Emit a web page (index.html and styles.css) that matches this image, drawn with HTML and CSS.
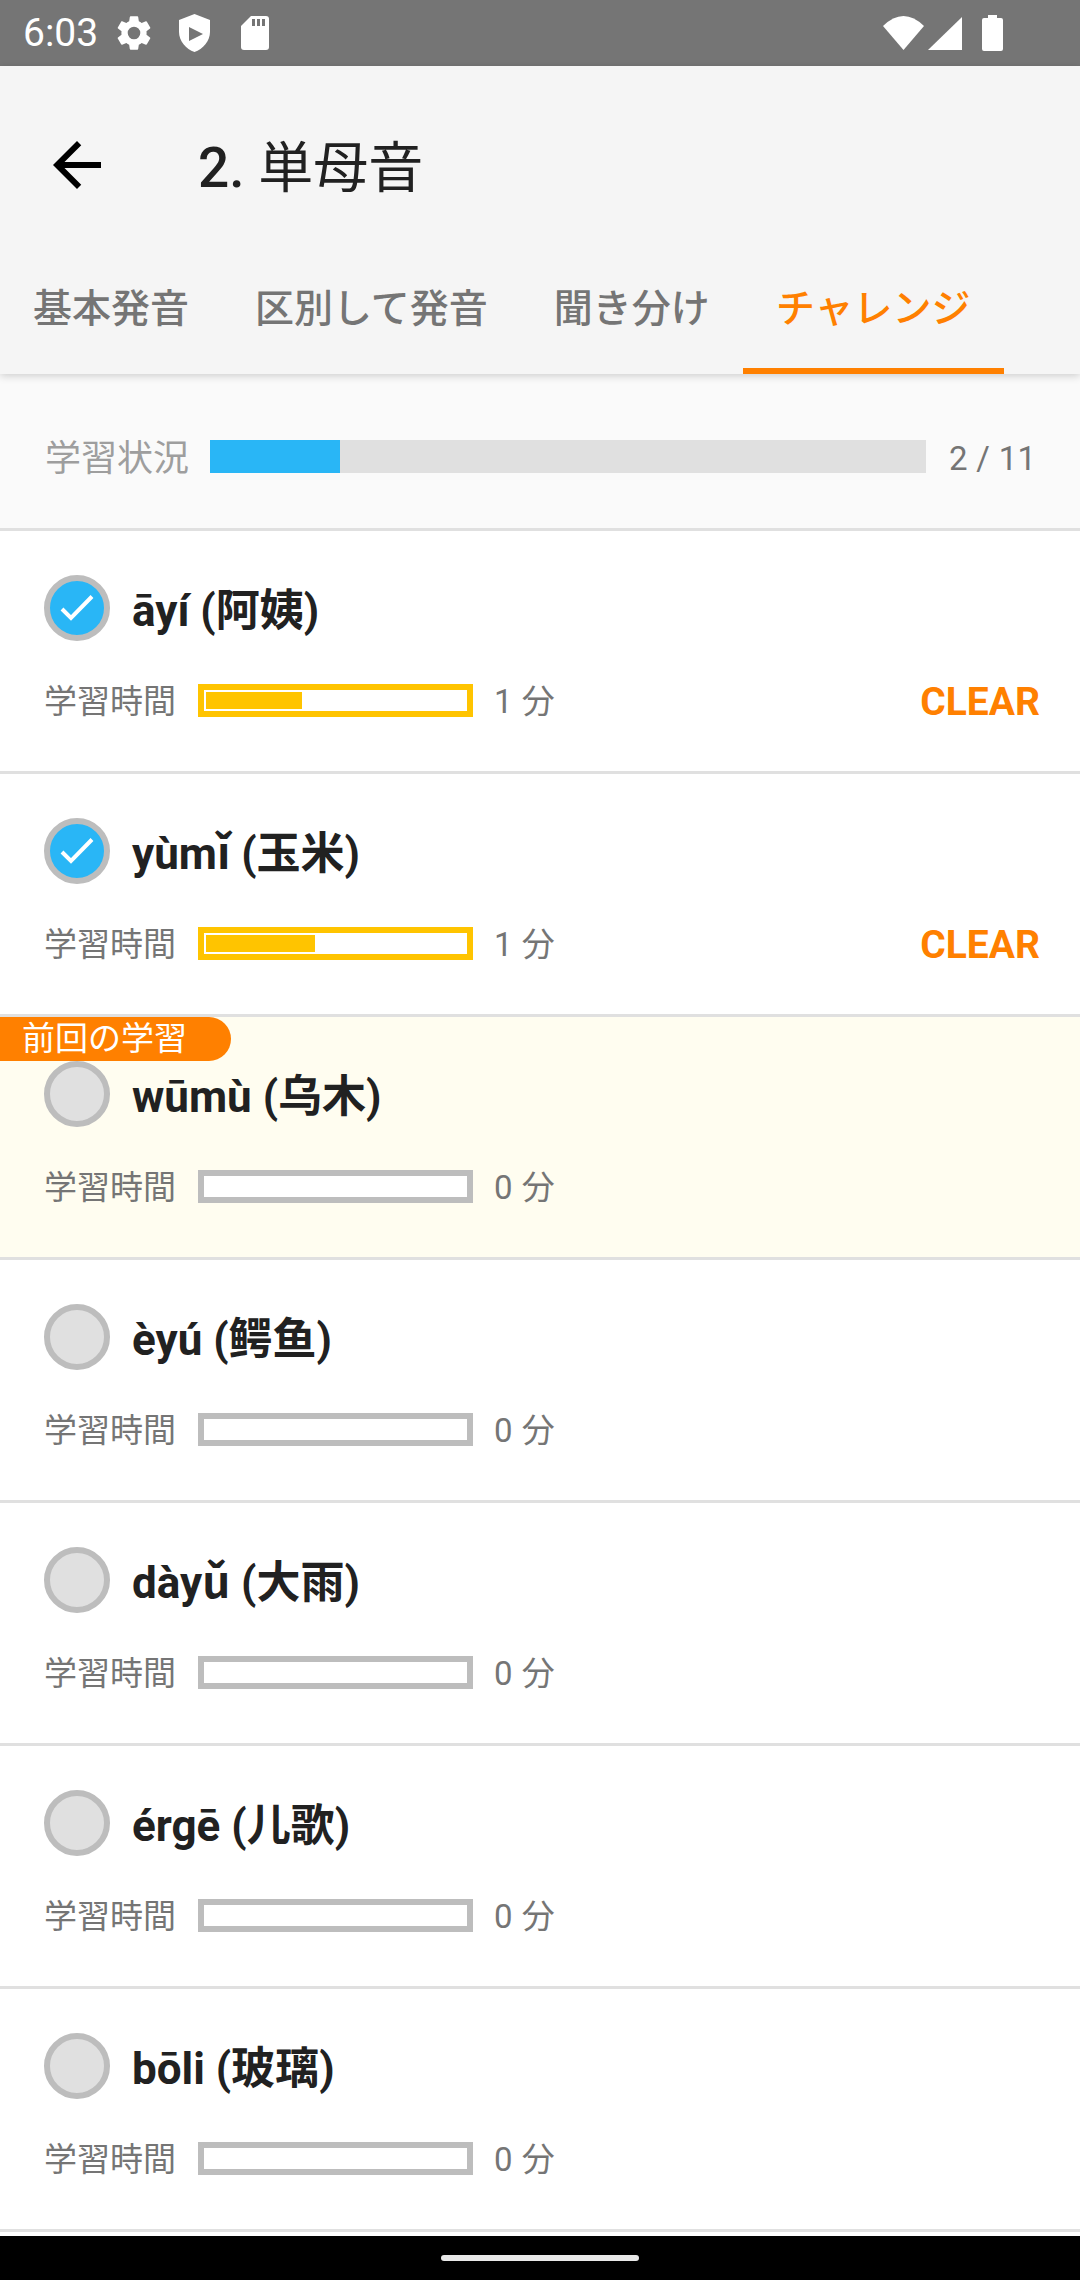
FILE: index.html
```html
<!DOCTYPE html>
<html lang="ja">
<head>
  <meta charset="UTF-8" />
  <meta name="viewport" content="width=device-width, initial-scale=1" />
  <title>2. 単母音</title>
  <link rel="stylesheet" href="styles.css">
</head>
<body>
  <div class="status-bar">
    <span class="clock">6:03</span>
    <svg class="ic-gear" width="42" height="42" viewBox="0 0 24 24"><path fill="#fff" d="M19.14 12.94c.04-.3.06-.61.06-.94 0-.32-.02-.64-.07-.94l2.03-1.58a.49.49 0 0 0 .12-.61l-1.92-3.32a.488.488 0 0 0-.59-.22l-2.39.96c-.5-.38-1.03-.7-1.62-.94l-.36-2.54a.484.484 0 0 0-.48-.41h-3.84c-.24 0-.43.17-.47.41l-.36 2.54c-.59.24-1.13.57-1.62.94l-2.39-.96c-.22-.08-.47 0-.59.22L2.74 8.87c-.12.21-.08.47.12.61l2.03 1.58c-.05.3-.09.63-.09.94s.02.64.07.94l-2.03 1.58a.49.49 0 0 0-.12.61l1.92 3.32c.12.22.37.29.59.22l2.39-.96c.5.38 1.03.7 1.62.94l.36 2.54c.05.24.24.41.48.41h3.84c.24 0 .44-.17.47-.41l.36-2.54c.59-.24 1.13-.56 1.62-.94l2.39.96c.22.08.47 0 .59-.22l1.92-3.32c.12-.22.07-.47-.12-.61l-2.01-1.58zM12 15.6A3.6 3.6 0 1 1 12 8.4a3.6 3.6 0 0 1 0 7.2z"/></svg>
    <svg class="ic-shield" width="31" height="38" viewBox="0 0 31 38"><path fill="#fff" fill-rule="evenodd" d="M15.5 0 31 6V18C31 27 24 35 15.5 38 7 35 0 27 0 18V6zM10 13V27L24 20z"/></svg>
    <svg class="ic-sd" width="28" height="34" viewBox="0 0 28 34">
      <path fill="#fff" d="M10 0H25a3 3 0 0 1 3 3V31a3 3 0 0 1-3 3H3a3 3 0 0 1-3-3V10z"/>
      <path fill="#757575" d="M11 3h3v7h-3zM16 3h3v7h-3zM21 3h3v7h-3z"/>
    </svg>
    <div class="status-right">
      <svg width="41" height="34" viewBox="0 0 41 34"><path fill="#fff" d="M0 10Q20.500-10 41 10L20.500 34z"/></svg>
      <svg width="34" height="33" viewBox="0 0 34 33"><path fill="#fff" d="M34 0V33H0z"/></svg>
      <svg class="ic-battery" width="21" height="36" viewBox="0 0 21 36"><path fill="#fff" d="M6 0h9v3h4a2 2 0 0 1 2 2V34a2 2 0 0 1-2 2H2a2 2 0 0 1-2-2V5a2 2 0 0 1 2-2h4z"/></svg>
    </div>
  </div>

  <header class="app-bar">
    <div class="toolbar">
      <svg class="back" width="72" height="72" viewBox="0 0 24 24"><path fill="#000" d="M20 11H7.830l5.590-5.590L12 4l-8 8 8 8 1.410-1.410L7.830 13H20v-2z"/></svg>
      <span class="title"><span class="title-num">2.</span> 単母音</span>
    </div>
    <nav class="tabs">
      <a class="tab">基本発音</a>
      <a class="tab">区別して発音</a>
      <a class="tab">聞き分け</a>
      <a class="tab active">チャレンジ</a>
    </nav>
  </header>

  <section class="progress">
    <span class="progress-label">学習状況</span>
    <div class="progress-track"><div class="progress-fill" style="width: 18.18%"></div></div>
    <span class="progress-count">2 / 11</span>
  </section>

  <main class="lessons">
    <div class="lesson">
      <div class="lesson-head">
        <span class="mark done"><svg width="54" height="54" viewBox="0 0 54 54"><path fill="none" stroke="#fff" stroke-width="4" d="M12 28 21 37 42 15.500"/></svg></span>
        <span class="lesson-name">āyí (阿姨)</span>
      </div>
      <div class="lesson-time">
        <span class="time-label">学習時間</span>
        <div class="time-bar on"><div class="time-fill" style="width: 37%"></div></div>
        <span class="time-value">1 分</span>
        <span class="clear">CLEAR</span>
      </div>
    </div>

    <div class="lesson">
      <div class="lesson-head">
        <span class="mark done"><svg width="54" height="54" viewBox="0 0 54 54"><path fill="none" stroke="#fff" stroke-width="4" d="M12 28 21 37 42 15.500"/></svg></span>
        <span class="lesson-name">yùmǐ (玉米)</span>
      </div>
      <div class="lesson-time">
        <span class="time-label">学習時間</span>
        <div class="time-bar on"><div class="time-fill" style="width: 42%"></div></div>
        <span class="time-value">1 分</span>
        <span class="clear">CLEAR</span>
      </div>
    </div>

    <div class="lesson last-studied">
      <span class="badge">前回の学習</span>
      <div class="lesson-head">
        <span class="mark"></span>
        <span class="lesson-name">wūmù (乌木)</span>
      </div>
      <div class="lesson-time">
        <span class="time-label">学習時間</span>
        <div class="time-bar"></div>
        <span class="time-value">0 分</span>
      </div>
    </div>

    <div class="lesson">
      <div class="lesson-head">
        <span class="mark"></span>
        <span class="lesson-name">èyú (鳄鱼)</span>
      </div>
      <div class="lesson-time">
        <span class="time-label">学習時間</span>
        <div class="time-bar"></div>
        <span class="time-value">0 分</span>
      </div>
    </div>

    <div class="lesson">
      <div class="lesson-head">
        <span class="mark"></span>
        <span class="lesson-name">dàyǔ (大雨)</span>
      </div>
      <div class="lesson-time">
        <span class="time-label">学習時間</span>
        <div class="time-bar"></div>
        <span class="time-value">0 分</span>
      </div>
    </div>

    <div class="lesson">
      <div class="lesson-head">
        <span class="mark"></span>
        <span class="lesson-name">érgē (儿歌)</span>
      </div>
      <div class="lesson-time">
        <span class="time-label">学習時間</span>
        <div class="time-bar"></div>
        <span class="time-value">0 分</span>
      </div>
    </div>

    <div class="lesson">
      <div class="lesson-head">
        <span class="mark"></span>
        <span class="lesson-name">bōli (玻璃)</span>
      </div>
      <div class="lesson-time">
        <span class="time-label">学習時間</span>
        <div class="time-bar"></div>
        <span class="time-value">0 分</span>
      </div>
    </div>
  </main>

  <div class="nav-bar"><span class="nav-handle"></span></div>
</body>
</html>
```

FILE: styles.css
```css
* {
  box-sizing: border-box;
}

html, body {
  height: 100%;
}

body {
  display: flex;
  flex-direction: column;
  width: 1080px;
  height: 2280px;
  margin: 0;
  overflow: hidden;
  background: #fff;
  font-family: Roboto, "Noto Sans CJK JP", sans-serif;
  color: #212121;
}

/* Status bar */
.status-bar {
  display: flex;
  align-items: center;
  flex: none;
  height: 66px;
  padding: 0 77px 0 23px;
  background: #757575;
}

.clock {
  width: 73px;
  font-size: 39px;
  color: #fff;
}

.status-bar svg {
  display: block;
}

.ic-gear {
  margin-left: 17px;
}

.ic-shield {
  margin-left: 24px;
}

.ic-sd {
  margin-left: 31px;
}

.status-right {
  display: flex;
  align-items: center;
  gap: 4px;
  margin-left: auto;
}

.ic-battery {
  margin-left: 16px;
}

/* Toolbar and tabs */
.app-bar {
  position: relative;
  z-index: 2;
  flex: none;
  background: #f5f5f5;
  box-shadow: 0 2px 8px rgb(0 0 0 / 0.18);
}

.toolbar {
  display: flex;
  align-items: center;
  height: 174px;
  padding: 24px 0 0 41px;
}

.title {
  margin: 0 0 5px 85px;
  font-size: 55px;
  color: #212121;
}

.title-num {
  font-weight: 500;
}

.tabs {
  display: flex;
  height: 134px;
}

.tab {
  display: flex;
  align-items: center;
  padding: 0 33px 5px;
  font-size: 39px;
  font-weight: 500;
  color: #757575;
}

.tab.active {
  color: #ff8000;
  box-shadow: inset 0 -6px 0 #ff8000;
}

/* Overall progress */
.progress {
  display: flex;
  align-items: center;
  flex: none;
  height: 157px;
  padding: 10px 0 0 45px;
  background: #fafafa;
  border-bottom: 3px solid #e0e0e0;
}

.progress-label {
  flex: none;
  width: 165px;
  padding-bottom: 2px;
  font-size: 36px;
  color: #9e9e9e;
}

.progress-track {
  flex: none;
  width: 716px;
  height: 33px;
  background: #e0e0e0;
}

.progress-fill {
  height: 100%;
  background: #29b6f6;
}

.progress-count {
  flex: none;
  margin-left: 23px;
  padding-top: 4px;
  font-size: 33px;
  letter-spacing: 0.3px;
  white-space: nowrap;
  color: #757575;
}

/* Lesson rows */
.lessons {
  flex: 1;
  overflow: hidden;
}

.lesson {
  position: relative;
  height: 243px;
  padding: 44px 40px 0 44px;
  border-bottom: 3px solid #e0e0e0;
}

.last-studied {
  background: #fffdf0;
}

.badge {
  position: absolute;
  top: 0;
  left: 0;
  width: 231px;
  height: 44px;
  padding-left: 22px;
  border-radius: 0 22px 22px 0;
  background: #ff8000;
  font-size: 33px;
  line-height: 44px;
  color: #fff;
}

.lesson-head {
  display: flex;
  align-items: center;
  gap: 22px;
  height: 66px;
}

.mark {
  display: block;
  flex: none;
  width: 66px;
  height: 66px;
  border: 6px solid #bdbdbd;
  border-radius: 50%;
  background: #e0e0e0;
}

.mark.done {
  background: #29b6f6;
}

.mark svg {
  display: block;
}

.lesson-name {
  padding-bottom: 3px;
  font-size: 44px;
  font-weight: 700;
  color: #212121;
}

.lesson-time {
  display: flex;
  align-items: center;
  height: 33px;
  margin-top: 43px;
}

.time-label {
  width: 154px;
  padding-bottom: 3px;
  font-size: 33px;
  color: #757575;
}

.time-bar {
  width: 275px;
  height: 33px;
  padding: 2px;
  border: 6px solid #bdbdbd;
  background: #fff;
}

.time-bar.on {
  border-color: #ffc400;
}

.time-fill {
  height: 100%;
  background: #ffc400;
}

.time-value {
  margin-left: 21px;
  padding-bottom: 3px;
  font-size: 33px;
  letter-spacing: 0.5px;
  color: #757575;
}

.clear {
  margin-left: auto;
  padding-top: 2px;
  font-size: 39px;
  font-weight: 700;
  color: #ff8000;
}

/* Navigation bar */
.nav-bar {
  display: flex;
  align-items: center;
  justify-content: center;
  flex: none;
  height: 44px;
  background: #000;
}

.nav-handle {
  width: 198px;
  height: 6px;
  border-radius: 3px;
  background: #e8e8e8;
}
```
